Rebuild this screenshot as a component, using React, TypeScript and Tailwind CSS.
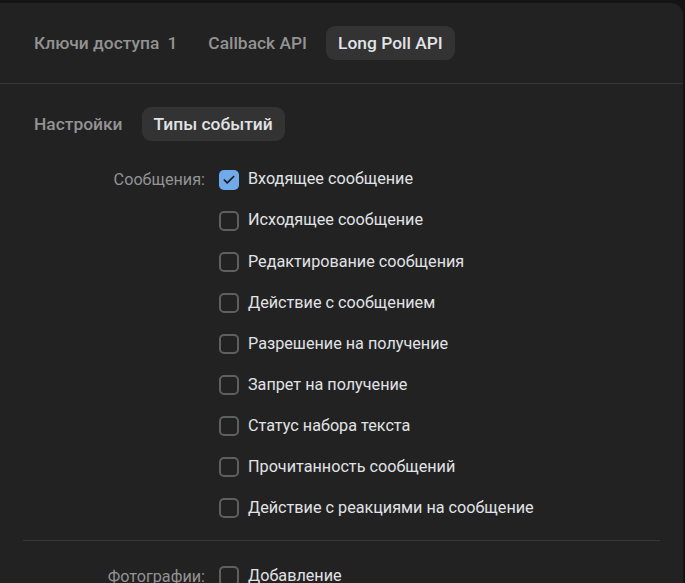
import { Check } from "lucide-react";

type Section = {
  title: string;
  events: { label: string; checked?: boolean }[];
};

const sections: Section[] = [
  {
    title: "Сообщения:",
    events: [
      { label: "Входящее сообщение", checked: true },
      { label: "Исходящее сообщение" },
      { label: "Редактирование сообщения" },
      { label: "Действие с сообщением" },
      { label: "Разрешение на получение" },
      { label: "Запрет на получение" },
      { label: "Статус набора текста" },
      { label: "Прочитанность сообщений" },
      { label: "Действие с реакциями на сообщение" },
    ],
  },
  {
    title: "Фотографии:",
    events: [{ label: "Добавление" }, { label: "Новый комментарий" }],
  },
];

function Tab({ label, active, count }: { label: string; active?: boolean; count?: number }) {
  return (
    <div
      className={
        active
          ? "flex h-[34px] items-center rounded-[9px] bg-[#333333] px-3 text-[17.4px] font-medium text-[#e1e3e6]"
          : "flex h-[34px] items-center rounded-[9px] px-3 text-[17.4px] font-medium text-[#939393]"
      }
    >
      {label}
      {count !== undefined && <span className="ml-[8px]">{count}</span>}
    </div>
  );
}

function Checkbox({ checked }: { checked?: boolean }) {
  if (checked) {
    return (
      <span className="flex h-[20px] w-[20px] shrink-0 items-center justify-center rounded-[5px] bg-[#71aaeb]">
        <Check size={14} strokeWidth={3} className="text-[#19191a]" />
      </span>
    );
  }
  return (
    <span className="h-[20px] w-[20px] shrink-0 rounded-[5px] border-2 border-[#5d5f61]" />
  );
}

export default function App() {
  return (
    <div
      className="h-[583px] overflow-hidden bg-[#141414] pr-[2px] pt-[3px]"
      style={{ fontFamily: "Roboto, 'Noto Sans', sans-serif" }}
    >
      <div className="h-full rounded-tr-[12px] bg-[#222222]">
        <div className="flex h-[81px] items-center gap-[7px] border-b border-[#363738] px-[22px]">
          <Tab label="Ключи доступа" count={1} />
          <Tab label="Callback API" />
          <Tab label="Long Poll API" active />
        </div>

        <div className="flex gap-[7px] px-[22px] pt-[23px]">
          <Tab label="Настройки" />
          <Tab label="Типы событий" active />
        </div>

        <div className="px-[23px] pt-[18px]">
          {sections.map((section, i) => (
            <div
              key={section.title}
              className={i > 0 ? "flex pt-[15px]" : "flex border-b border-[#363738] pb-[11px]"}
            >
              <div className="w-[182px] shrink-0 text-right text-[16.2px] leading-[41px] text-[#939393]">
                {section.title}
              </div>
              <ul className="ml-[14px] flex flex-col">
                {section.events.map((ev) => (
                  <li key={ev.label} className="flex h-[41.1px] items-center gap-[9px]">
                    <Checkbox checked={ev.checked} />
                    <span className="text-[16.2px] text-[#e1e3e6]">{ev.label}</span>
                  </li>
                ))}
              </ul>
            </div>
          ))}
        </div>
      </div>
    </div>
  );
}
